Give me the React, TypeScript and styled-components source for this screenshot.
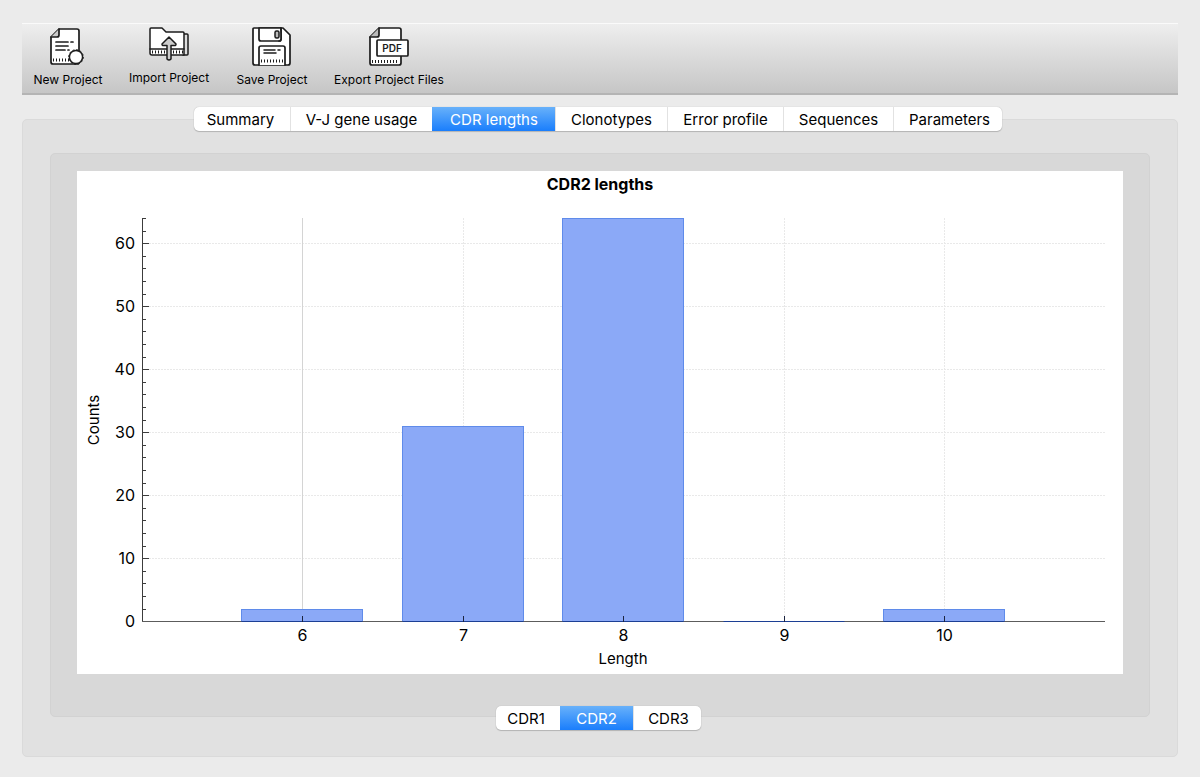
import React, { useState } from "react";
import styled, { createGlobalStyle } from "styled-components";

const GlobalStyle = createGlobalStyle`
  * { box-sizing: border-box; }
  body {
    margin: 0;
    background: #ebebeb;
    color: #000;
    font-family: Inter, "Liberation Sans", sans-serif;
  }
  button { font: inherit; color: inherit; }
`;

const Page = styled.div`
  min-height: 100vh;
  padding: 23px 22px 20px;
`;

const Toolbar = styled.div`
  display: flex;
  align-items: flex-start;
  gap: 22px;
  height: 72px;
  padding: 2px 10px 0;
  border-top: 1px solid #fafafa;
  border-bottom: 2px solid #b4b4b4;
  background: linear-gradient(#eeeeee, #c6c6c6);
`;

const ToolButton = styled.button<{ $width: number }>`
  display: flex;
  flex: 0 0 auto;
  flex-direction: column;
  align-items: center;
  width: ${(p) => p.$width}px;
  padding: 0;
  border: 0;
  background: none;
  font-size: 12px;
  line-height: 22px;
  white-space: nowrap;
`;

const Icon = styled.svg`
  display: block;
  fill: #fff;
  stroke: #1c1c1c;
  stroke-width: 1.7;
  stroke-linejoin: round;
  stroke-linecap: round;
`;

const Section = styled.div`
  display: flex;
  flex-direction: column;
  align-items: center;
  margin-top: 12px;
`;

const Segments = styled.div<{ $columns: string; $width: number }>`
  position: relative;
  z-index: 1;
  display: grid;
  grid-template-columns: ${(p) => p.$columns};
  width: ${(p) => p.$width}px;
  max-width: 100%;
  height: 24px;
  margin-right: 4px;
  border-radius: 5px;
  background: #fff;
  box-shadow: 0 0 1px #a8a8a8, 0 1px 1px #b4b4b4;
`;

const Segment = styled.button<{ $active: boolean }>`
  padding: 1px 0 0;
  border: 0;
  border-left: 1px solid ${(p) => (p.$active ? "transparent" : "#e2e2e2")};
  background: ${(p) => (p.$active ? "linear-gradient(#68b1fa, #1a7efc) border-box" : "none")};
  color: ${(p) => (p.$active ? "#fff" : "#000")};
  font-size: 15px;
  line-height: 23px;
  white-space: nowrap;
  &:first-child { padding-right: 4px; border-left-color: transparent; border-radius: 5px 0 0 5px; }
  &:last-child { padding-left: 3px; border-radius: 0 5px 5px 0; }
`;

const OuterPanel = styled.div`
  display: flex;
  flex-direction: column;
  align-items: center;
  width: 100%;
  margin-top: -12px;
  padding: 33px 27px 26px;
  border: 1px solid #dadada;
  border-radius: 5px;
  background: #e1e1e1;
`;

const InnerPanel = styled.div`
  width: 100%;
  margin-bottom: -11px;
  padding: 17px 26px 42px;
  border: 1px solid #d2d2d2;
  border-radius: 5px;
  background: #d8d8d8;
`;

const Chart = styled.svg`
  display: block;
  width: 100%;
  height: auto;
  background: #fff;
  font-size: 16px;
`;

const TABS = ["Summary", "V-J gene usage", "CDR lengths", "Clonotypes", "Error profile", "Sequences", "Parameters"];
const REGIONS = ["CDR1", "CDR2", "CDR3"];

const DATA = [
  { length: 6, count: 2 },
  { length: 7, count: 31 },
  { length: 8, count: 64 },
  { length: 9, count: 0 },
  { length: 10, count: 2 },
];

const LEFT = 66;
const RIGHT = 1028;
const TOP = 47;
const BASE = 451;
const BAR = 121;
const yOf = (count: number) => Math.round(BASE + 0.2 - count * 6.3) - 0.5;
const xOf = (length: number) => Math.round(225 + (length - 6) * 160.5) + 0.5;

const MAJOR = [0, 10, 20, 30, 40, 50, 60];
const MINOR = Array.from({ length: 33 }, (_, i) => i * 2).filter((v) => v % 10 !== 0);

function Histogram() {
  return (
    <Chart viewBox="0 0 1046 503" role="img" aria-label="CDR2 lengths histogram">
      <text x="523" y="19" textAnchor="middle" fontWeight="700">CDR2 lengths</text>
      <g stroke="#e9e9e9" strokeDasharray="2 1">
        {MAJOR.slice(1).map((v) => (
          <line key={v} x1={LEFT + 6} x2={RIGHT} y1={yOf(v)} y2={yOf(v)} />
        ))}
        {DATA.slice(1).map((d) => (
          <line key={d.length} x1={xOf(d.length)} x2={xOf(d.length)} y1={TOP} y2={BASE} />
        ))}
      </g>
      <line x1={xOf(6)} x2={xOf(6)} y1={TOP} y2={BASE} stroke="#d4d4d4" />
      <g fill="#8ba9f7" stroke="#5f8bea">
        {DATA.filter((d) => d.count > 0).map((d) => (
          <rect key={d.length} x={xOf(d.length) - 61} y={yOf(d.count)} width={BAR} height={yOf(0) - yOf(d.count)} />
        ))}
      </g>
      <g stroke="#3c3c3c">
        <line x1={LEFT - 0.5} x2={LEFT - 0.5} y1={TOP} y2={BASE} />
        {MAJOR.map((v) => (
          <line key={v} x1={LEFT} x2={LEFT + 6} y1={yOf(v)} y2={yOf(v)} />
        ))}
        {MINOR.map((v) => (
          <line key={v} x1={LEFT} x2={LEFT + 3} y1={yOf(v)} y2={yOf(v)} />
        ))}
        <line x1={LEFT - 1} x2={RIGHT} y1={yOf(0)} y2={yOf(0)} stroke="#5c5c5c" />
      </g>
      {DATA.map((d) => (
        <g key={d.length} stroke="#1c3f94">
          <line x1={xOf(d.length) - 61} x2={xOf(d.length) + 60} y1={yOf(0)} y2={yOf(0)} />
          <line x1={xOf(d.length)} x2={xOf(d.length)} y1={BASE - 6} y2={BASE} stroke="#1b2440" />
        </g>
      ))}
      {MAJOR.map((v) => (
        <text key={v} x="58" y={yOf(v) + 5} textAnchor="end">{v}</text>
      ))}
      {DATA.map((d) => (
        <text key={d.length} x={xOf(d.length)} y="470" textAnchor="middle">{d.length}</text>
      ))}
      <text x="546" y="493" textAnchor="middle" fontSize="15">Length</text>
      <text transform="translate(22 249) rotate(-90)" textAnchor="middle" fontSize="15">Counts</text>
    </Chart>
  );
}

const NewIcon = () => (
  <Icon width="40" height="43" viewBox="0 0 40 43" aria-hidden="true">
    <path d="M11 3h18a2 2 0 0 1 2 2v31a2 2 0 0 1-2 2H5a2 2 0 0 1-2-2V11z" />
    <path d="M11 3v6a2 2 0 0 1-2 2H3" fill="#ccc" />
    <path d="M8 16h12M23 16h2M8 20h12M8 24h9M20 24h1" />
    <path d="M5 34h16" strokeDasharray="1 2" strokeLinecap="butt" strokeWidth="3" />
    <circle cx="28" cy="31" r="6.600" strokeWidth="1.500" />
    <circle cx="28" cy="31" r="7.300" fill="none" strokeWidth="1" strokeDasharray="2 1.820" strokeLinecap="butt" />
  </Icon>
);

const ImportIcon = () => (
  <Icon width="40" height="41" viewBox="0 0 40 41" aria-hidden="true">
    <path d="M34 8h4q1 0 1 1v19q0 1-1 1h-4z" fill="#ddd" strokeWidth="1.500" />
    <path d="M2 2h11l4 4h17q1 0 1 1v22H3q-2 0-2-2V3q0-1 1-1z" strokeWidth="1.500" />
    <path d="M1 23h34" strokeWidth="1.500" />
    <path d="M3 26h31" strokeDasharray="1 2" strokeLinecap="butt" strokeWidth="3" />
    <path d="M20 11l7 7q0 2-2 1.500h-3V33q-2 2-4 0V19.500h-3q-2 .5-2-1.500z" fill="#ccc" strokeWidth="1.500" />
  </Icon>
);

const SaveIcon = () => (
  <Icon width="40" height="43" viewBox="0 0 40 43" aria-hidden="true">
    <path d="M2 2h29l7 7v28q0 2-2 2H3q-2 0-2-2V3q0-1 1-1z" />
    <path d="M7 2h22v11q0 2-2 2H9q-2 0-2-2z" />
    <path d="M29 2v11q0 2-2 2" />
    <rect x="23" y="5" width="4" height="7" rx="1.500" fill="#bbb" strokeWidth="1.500" />
    <path d="M7 39V22q0-2 2-2h22q2 0 2 2v17" />
    <path d="M12 24h11M26 24h2M12 27h12" strokeWidth="1.500" />
    <path d="M9 35h22" strokeDasharray="1 2" strokeLinecap="butt" strokeWidth="3" />
  </Icon>
);

const ExportIcon = () => (
  <Icon width="40" height="43" viewBox="0 0 40 43" aria-hidden="true">
    <path d="M10 2h20q2 0 2 2v33q0 2-2 2H3q-2 0-2-2V11z" />
    <path d="M10 2v7q0 2-2 2H1" fill="#bbb" />
    <path d="M3 35.500h27" strokeDasharray="1 2" strokeLinecap="butt" strokeWidth="3" />
    <rect x="8" y="14" width="31" height="16" rx="1" />
    <text x="23" y="26" textAnchor="middle" fontSize="10" fontWeight="600" fill="#1c1c1c" stroke="none">PDF</text>
  </Icon>
);

export default function App() {
  const [tab, setTab] = useState("CDR lengths");
  const [region, setRegion] = useState("CDR2");
  return (
    <Page>
      <GlobalStyle />
      <Toolbar role="toolbar">
        <ToolButton $width={72}><NewIcon />New Project</ToolButton>
        <ToolButton $width={86}><ImportIcon />Import Project</ToolButton>
        <ToolButton $width={76}><SaveIcon />Save Project</ToolButton>
        <ToolButton $width={114}><ExportIcon />Export Project Files</ToolButton>
      </Toolbar>
      <Section>
        <Segments role="tablist" $columns="96fr 142fr 123fr 112fr 116fr 110fr 109fr" $width={808}>
          {TABS.map((name) => (
            <Segment key={name} role="tab" aria-selected={name === tab} $active={name === tab} onClick={() => setTab(name)}>
              {name}
            </Segment>
          ))}
        </Segments>
        <OuterPanel>
          <InnerPanel>
            <Histogram />
          </InnerPanel>
          <Segments role="tablist" $columns="64fr 73fr 68fr" $width={205}>
            {REGIONS.map((name) => (
              <Segment key={name} role="tab" aria-selected={name === region} $active={name === region} onClick={() => setRegion(name)}>
                {name}
              </Segment>
            ))}
          </Segments>
        </OuterPanel>
      </Section>
    </Page>
  );
}
